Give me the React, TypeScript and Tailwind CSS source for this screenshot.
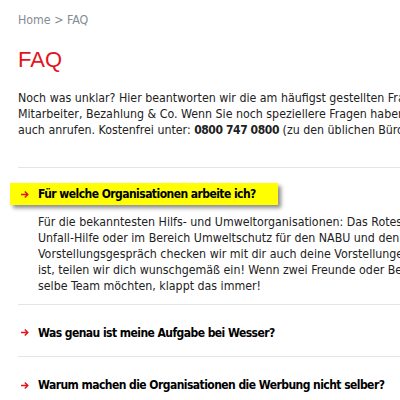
const Arrow = () => (
  <svg width="8" height="9" viewBox="0 0 8 9" className="shrink-0">
    <path d="M0 4.5H6.8M3.8 1.5L6.8 4.5L3.8 7.5" stroke="#e3141c" strokeWidth="1.5" fill="none" />
  </svg>
)

const Question = ({ text }: { text: string }) => (
  <span className="font-bold text-[12px] tracking-[-0.55px] text-black">{text}</span>
)

const App = () => {
  return (
    <div className="w-[400px] h-[400px] overflow-hidden bg-white font-['DejaVu_Sans_Condensed',sans-serif] text-[12.3px] text-[#333]">
      <div className="w-[640px] whitespace-nowrap">
        {/* breadcrumb */}
        <p className="pl-[18px] pt-[12px] leading-[16px] text-[#858b92]">Home &gt; FAQ</p>

        <h1 className="pl-[18px] mt-[19px] font-['Liberation_Sans',sans-serif] text-[22px] leading-[26px] text-[#e3141c]">FAQ</h1>

        <p className="pl-[18px] mt-[17px] leading-[16px] text-[#222]">
          Noch was unklar? Hier beantworten wir die am häufigst gestellten Fragen rund um unsere<br />
          Mitarbeiter, Bezahlung &amp; Co. Wenn Sie noch speziellere Fragen haben, können Sie uns gerne<br />
          auch anrufen. Kostenfrei unter: <b className="text-[12px] tracking-[-0.4px]">0800 747 0800</b> (zu den üblichen Bürozeiten)
        </p>

        <div className="ml-[18px] mt-[29px] border-t border-[#e5e5e5]" />

        {/* open item */}
        <div className="mt-[15px]">
          <div className="ml-[10px] w-[268px] h-[22px] bg-[#ffff00] shadow-[3px_3px_4px_rgba(0,0,0,0.45)] flex items-center gap-[9px] pl-[11px]">
            <Arrow />
            <Question text="Für welche Organisationen arbeite ich?" />
          </div>
          <p className="pl-[38px] mt-[9px] leading-[16px] text-[#222]">
            Für die bekanntesten Hilfs- und Umweltorganisationen: Das Rotes Kreuz, die Johanniter<br />
            Unfall-Hilfe oder im Bereich Umweltschutz für den NABU und den BUND. Schon im<br />
            Vorstellungsgespräch checken wir mit dir auch deine Vorstellungen ab. Wenn es möglich<br />
            ist, teilen wir dich wunschgemäß ein! Wenn zwei Freunde oder Bekannte gemeinsam in das<br />
            selbe Team möchten, klappt das immer!
          </p>
        </div>

        <div className="ml-[18px] mt-[10px] border-t border-[#e5e5e5]" />

        <div className="flex items-center gap-[9px] pl-[21px] pt-[4px] h-[51px]">
          <Arrow />
          <Question text="Was genau ist meine Aufgabe bei Wesser?" />
        </div>

        <div className="ml-[18px] border-t border-[#e5e5e5]" />

        <div className="flex items-center gap-[9px] pl-[21px] pt-[4px] h-[52px]">
          <Arrow />
          <Question text="Warum machen die Organisationen die Werbung nicht selber?" />
        </div>
      </div>
    </div>
  )
}

export default App
